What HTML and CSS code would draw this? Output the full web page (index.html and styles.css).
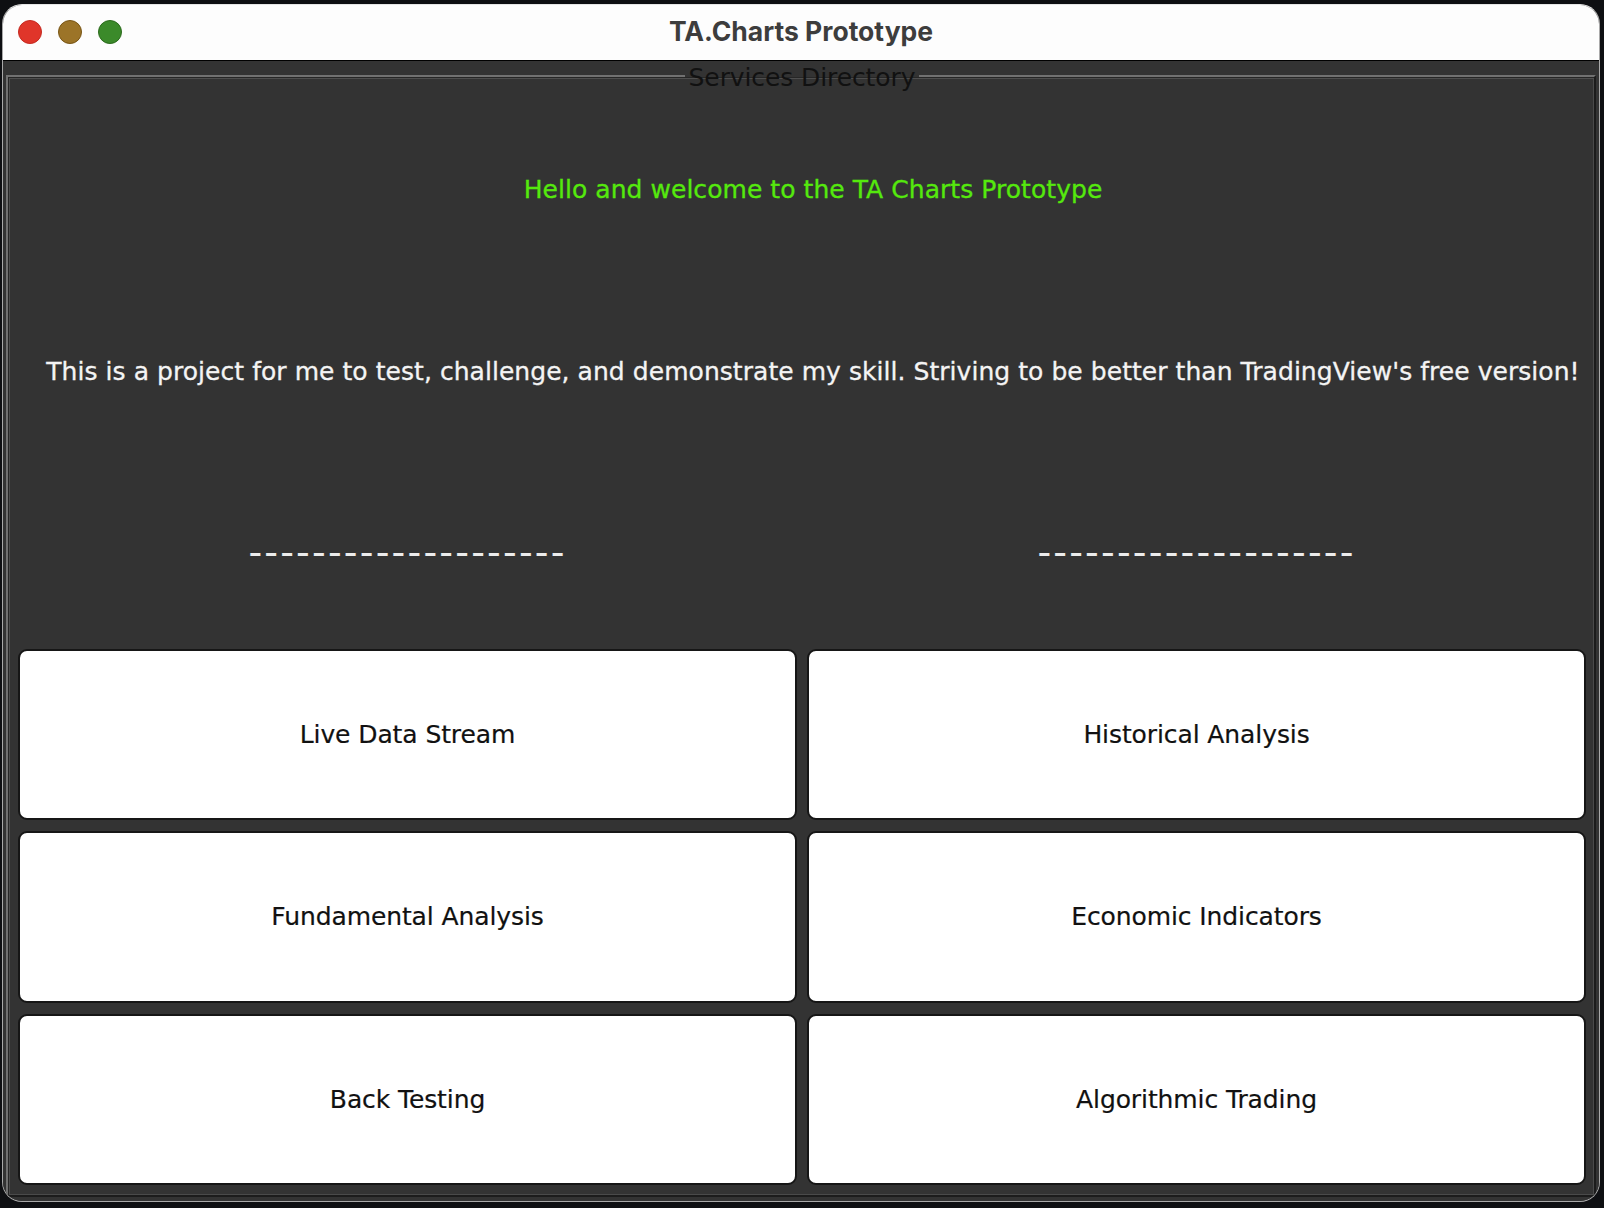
FILE: index.html
```html
<!DOCTYPE html>
<html lang="en">
<head>
<meta charset="utf-8">
<title>TA.Charts Prototype</title>
<link rel="stylesheet" href="styles.css">
</head>
<body>
<div class="window">
  <div class="titlebar">
    <div class="lights">
      <span class="light red"></span>
      <span class="light yellow"></span>
      <span class="light green"></span>
    </div>
    <div class="title">TA.Charts Prototype</div>
    <div class="spacer"></div>
  </div>
  <div class="content">
    <fieldset class="directory">
      <legend class="legend">Services Directory</legend>
      <div class="grid">
        <div class="cell wide welcome">Hello and welcome to the TA Charts Prototype</div>
        <div class="cell wide intro">This is a project for me to test, challenge, and demonstrate my skill. Striving to be better than TradingView's free version!</div>
        <div class="cell dashes">--------------------</div>
        <div class="cell dashes">--------------------</div>
        <button class="service">Live Data Stream</button>
        <button class="service">Historical Analysis</button>
        <button class="service">Fundamental Analysis</button>
        <button class="service">Economic Indicators</button>
        <button class="service">Back Testing</button>
        <button class="service">Algorithmic Trading</button>
      </div>
    </fieldset>
  </div>
</div>
</body>
</html>
```

FILE: styles.css
```css
html, body {
  margin: 0;
  padding: 0;
}
body {
  background: #0e0f12;
  padding: 4px 0 0 2px;
  width: 1602px;
  height: 1204px;
  overflow: hidden;
  font-family: "DejaVu Sans", "Liberation Sans", sans-serif;
}
.window {
  width: 1596px;
  height: 1196px;
  border: 1px solid #a9a9a9;
  border-top-color: #e6e6e6;
  border-radius: 20px;
  overflow: hidden;
  display: flex;
  flex-direction: column;
  background: #333333;
}
.titlebar {
  height: 55px;
  background: #fdfdfd;
  border-bottom: 1px solid #000;
  display: grid;
  grid-template-columns: 1fr auto 1fr;
  align-items: center;
  flex: none;
}
.lights {
  display: flex;
  gap: 16px;
  padding-left: 15px;
  padding-bottom: 2px;
}
.light {
  width: 22px;
  height: 22px;
  border-radius: 50%;
  border: 1px solid;
}
.red { background: #e0352a; border-color: #c42a21; }
.yellow { background: #9c7428; border-color: #785516; }
.green { background: #3b8a2a; border-color: #2c6a1d; }
.title {
  font-family: "Inter", "Open Sans", sans-serif;
  font-weight: 700;
  font-size: 26.5px;
  color: #3d3d3d;
  padding-bottom: 4px;
}
.content {
  flex: 1;
  display: flex;
  flex-direction: column;
  background: #333333;
}
.directory {
  margin: 0 3px 4px 3px;
  padding: 12px 8px 8px 10px;
  border: 2px solid #717171;
  border-right-color: #1c1c1c;
  border-bottom-color: #1c1c1c;
  box-shadow: inset 1px 1px 0 #262626, inset 2px 2px 0 #4e4e4e, inset -1px -1px 0 #4a4a4a;
  min-width: 0;
  flex: 1;
}
.legend {
  margin: 0 auto;
  padding: 5px 4px 0 4px;
  font-size: 25px;
  line-height: 24px;
  letter-spacing: -0.1px;
  color: #111111;
}
.grid {
  height: 1083px;
  display: grid;
  grid-template-columns: 1fr 1fr;
  grid-template-rows: repeat(6, 1fr);
  column-gap: 10px;
  row-gap: 11px;
}
.cell {
  display: flex;
  align-items: center;
  justify-content: center;
  white-space: nowrap;
}
.wide {
  grid-column: 1 / span 2;
  padding-left: 22px;
  font-size: 25px;
  letter-spacing: 0.05px;
  -webkit-text-stroke: 0.3px currentColor;
}
.welcome {
  color: #55e90d;
  padding-top: 4px;
}
.intro {
  color: #f4f4f4;
  padding-top: 4px;
}
.dashes {
  color: #ececec;
  font-size: 38px;
  letter-spacing: 2.2px;
}
.service {
  background: #ffffff;
  border: 2px solid #161616;
  border-radius: 9px;
  font-family: "DejaVu Sans", "Liberation Sans", sans-serif;
  font-size: 25px;
  letter-spacing: -0.1px;
  -webkit-text-stroke: 0.2px currentColor;
  color: #111111;
  padding: 0;
  margin: 0;
  cursor: pointer;
}
```
